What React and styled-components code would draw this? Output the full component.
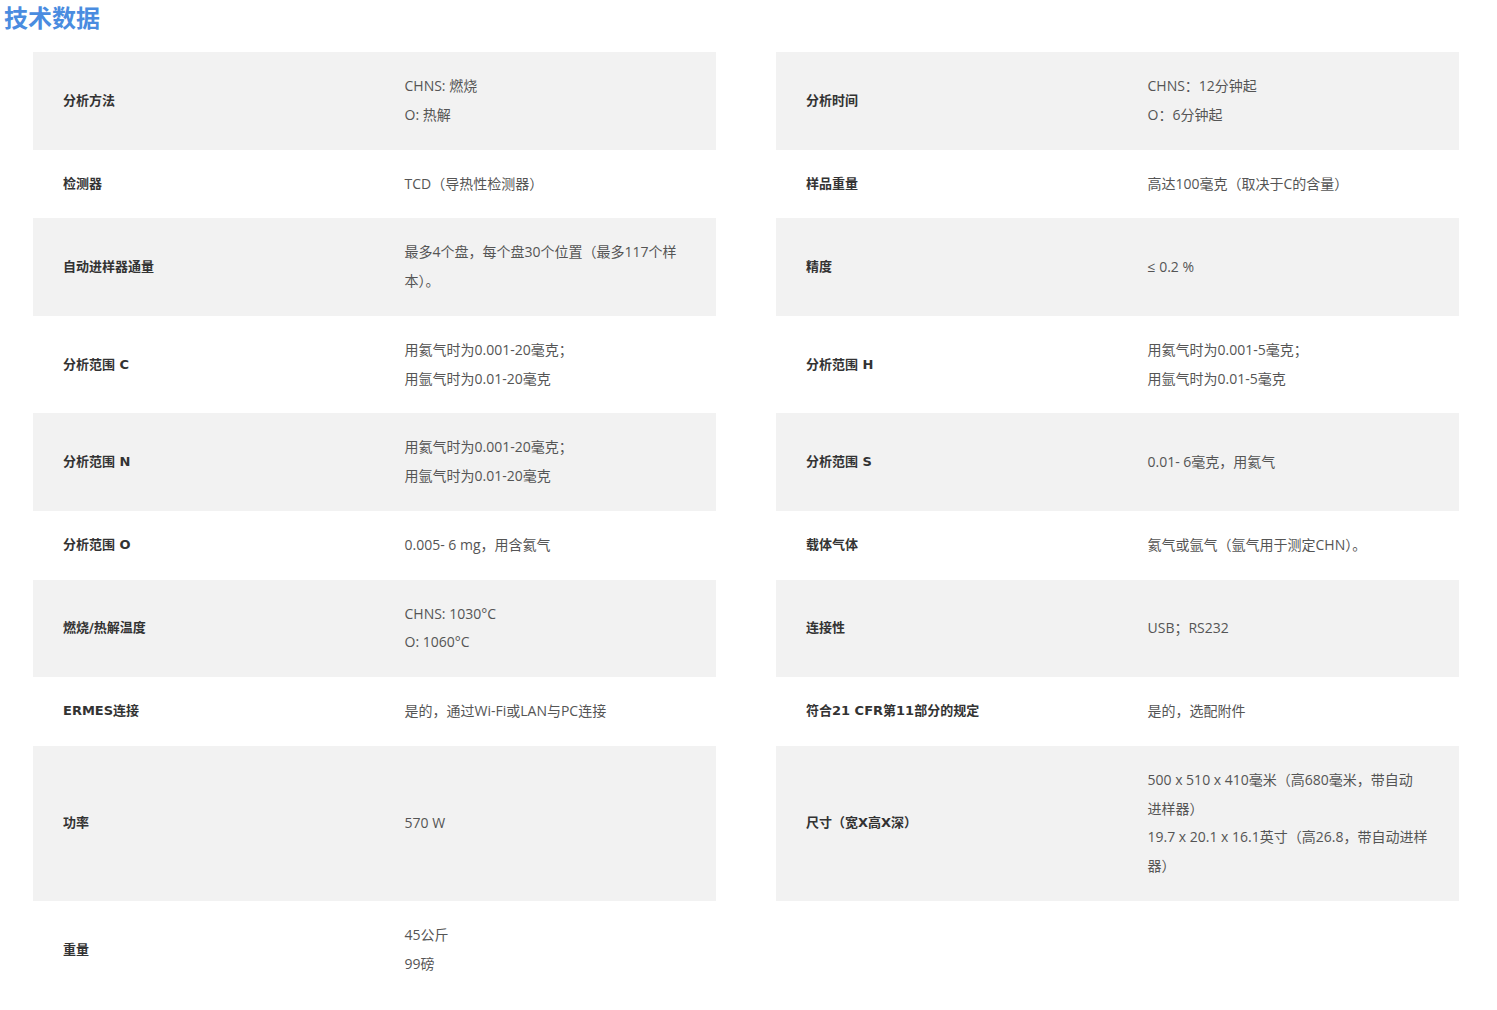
import React from 'react';
import styled, { createGlobalStyle } from 'styled-components';

const GlobalStyle = createGlobalStyle`
  body {
    margin: 0;
    background: #fff;
    font-family: "Open Sans", "Noto Sans CJK SC", sans-serif;
  }
`;

const Page = styled.div`
  padding: 0 38px 12px 0;
`;

const Title = styled.h2`
  margin: 0 0 18px;
  padding: 0 0 0 4px;
  font-size: 24px;
  line-height: 34px;
  font-weight: 700;
  color: #4a8ce0;
  font-family: "Noto Sans CJK SC", sans-serif;
`;

const Grid = styled.div`
  display: grid;
  grid-template-columns: 1fr 1fr;
  column-gap: 60px;
  margin-left: 33px;
`;

const Row = styled.div`
  display: grid;
  grid-template-columns: 1fr 1fr;
  align-items: center;
  background: ${(p) => (p.$shaded ? '#f2f2f2' : '#fff')};
  padding: 20px 0;
`;

const Label = styled.div`
  padding: 0 30px;
  font-family: "DejaVu Sans", "Noto Sans CJK SC", sans-serif;
  font-size: 13px;
  font-weight: 700;
  color: #333;
  line-height: 20px;
`;

const Value = styled.div`
  padding: 0 30px;
  font-size: 14px;
  line-height: 28.75px;
  color: #555;
  font-weight: 400;
`;

// each entry of the value list is one printed line
const rows = [
  [
    ['分析方法', ['CHNS: 燃烧', 'O: 热解']],
    ['分析时间', ['CHNS：12分钟起', 'O：6分钟起']],
  ],
  [
    ['检测器', ['TCD（导热性检测器）']],
    ['样品重量', ['高达100毫克（取决于C的含量）']],
  ],
  [
    ['自动进样器通量', ['最多4个盘，每个盘30个位置（最多117个样', '本）。']],
    ['精度', ['≤ 0.2 %']],
  ],
  [
    ['分析范围 C', ['用氦气时为0.001-20毫克；', '用氩气时为0.01-20毫克']],
    ['分析范围 H', ['用氦气时为0.001-5毫克；', '用氩气时为0.01-5毫克']],
  ],
  [
    ['分析范围 N', ['用氦气时为0.001-20毫克；', '用氩气时为0.01-20毫克']],
    ['分析范围 S', ['0.01- 6毫克，用氦气']],
  ],
  [
    ['分析范围 O', ['0.005- 6 mg，用含氦气']],
    ['载体气体', ['氦气或氩气（氩气用于测定CHN）。']],
  ],
  [
    ['燃烧/热解温度', ['CHNS: 1030°C', 'O: 1060°C']],
    ['连接性', ['USB；RS232']],
  ],
  [
    ['ERMES连接', ['是的，通过Wi-Fi或LAN与PC连接']],
    ['符合21 CFR第11部分的规定', ['是的，选配附件']],
  ],
  [
    ['功率', ['570 W']],
    [
      '尺寸（宽X高X深）',
      ['500 x 510 x 410毫米（高680毫米，带自动', '进样器）', '19.7 x 20.1 x 16.1英寸（高26.8，带自动进样', '器）'],
    ],
  ],
  [
    ['重量', ['45公斤', '99磅']],
  ],
];

const Spec = ({ label, values, shaded }) => (
  <Row $shaded={shaded}>
    <Label>{label}</Label>
    <Value>
      {values.map((v) => (
        <div key={v}>{v}</div>
      ))}
    </Value>
  </Row>
);

export default function App() {
  return (
    <Page>
      <GlobalStyle />
      <Title>技术数据</Title>
      <Grid>
        {rows.map((pair, i) =>
          pair.map(([label, values]) => (
            <Spec key={label} label={label} values={values} shaded={i % 2 === 0} />
          ))
        )}
      </Grid>
    </Page>
  );
}
